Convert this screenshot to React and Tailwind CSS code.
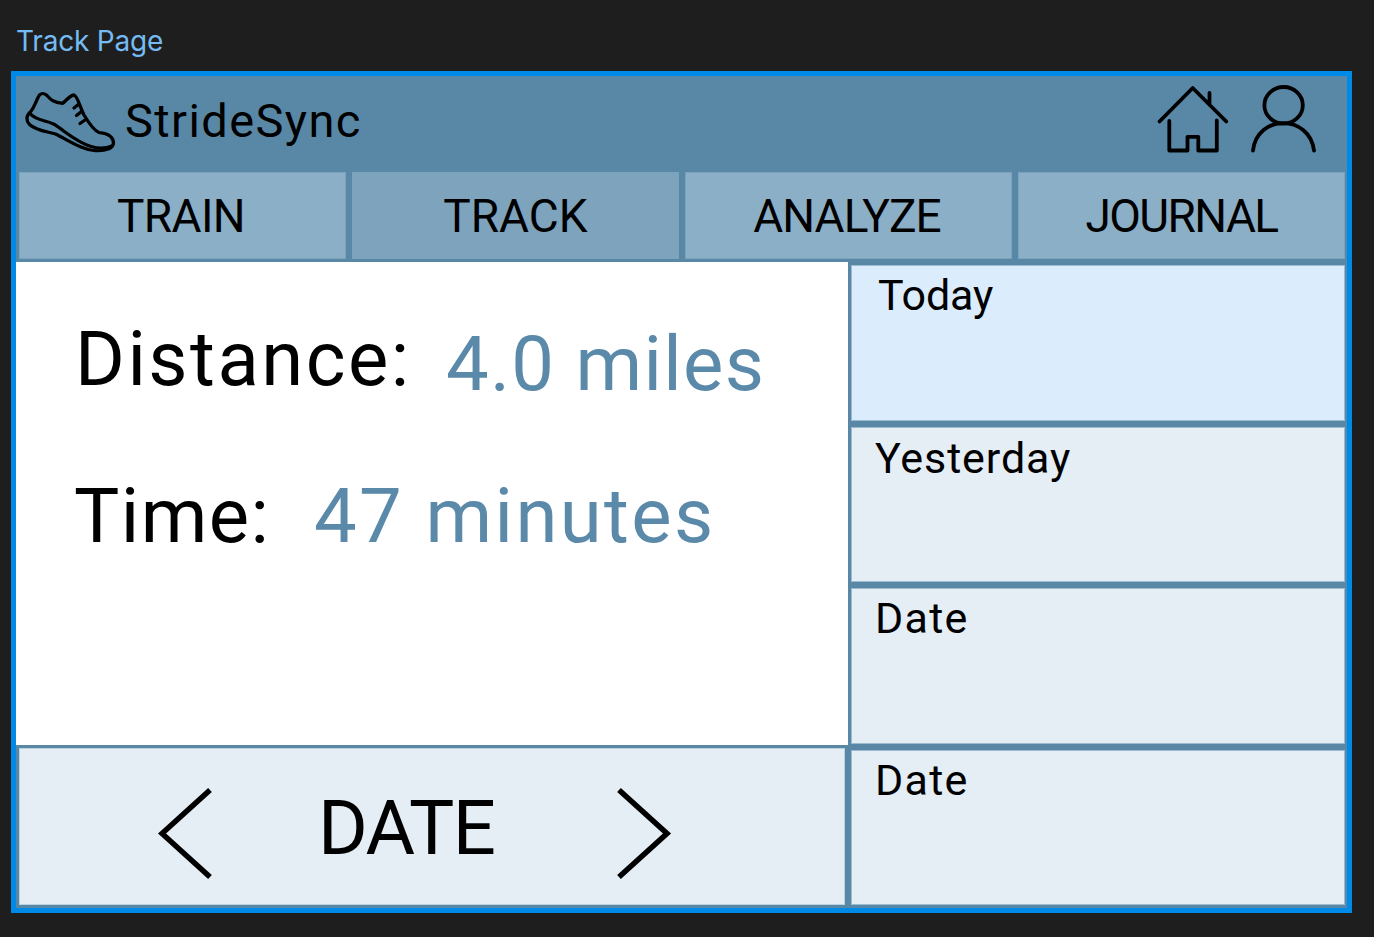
import React from "react";

const tabs = [
  { label: "TRAIN", box: "bg-[#8bafc6]", text: "tracking-[-0.6px] pr-[3px]" },
  { label: "TRACK", box: "bg-[#7da3bd]", text: "tracking-[0px]" },
  { label: "ANALYZE", box: "bg-[#8bafc6]", text: "tracking-[-0.9px] pr-[3px]" },
  { label: "JOURNAL", box: "bg-[#8bafc6]", text: "tracking-[-1.6px] pr-[0px]" },
];

const days = [
  { label: "Today", box: "bg-[#dbecfd] pl-[26px] pt-[8px]", text: "tracking-[-0.1px]" },
  { label: "Yesterday", box: "bg-[#e5edf5] pl-[23px] pt-[9px]", text: "tracking-[0.9px]" },
  { label: "Date", box: "bg-[#e5edf5] pl-[23px] pt-[8px]", text: "tracking-[1.3px]" },
  { label: "Date", box: "bg-[#e5edf5] pl-[23px] pt-[8px]", text: "tracking-[1.3px]" },
];

function ShoeIcon() {
  return (
    <svg className="h-[70px] w-[96px] shrink-0" viewBox="22 86 96 70" fill="none" stroke="#000" strokeWidth="3.3" strokeLinecap="round" strokeLinejoin="round">
      <path d="M30 112.500C35 107 37 98 39.500 95C41.500 93 44.500 93 47 95.500C51 100 53.500 102.500 62.800 103.300C66 100.500 70 95.500 74 95C77.500 96 79.500 106 84 115C88.500 122.500 93.500 130.500 99 132.500C103.500 133.300 107.500 132.800 111.500 137.500C114.800 142 114 146 109 148.800C101 151.800 90 151 81 147C71 143 63 137.500 55.500 134C47 131.500 36 130.500 29.500 124.500C26 120.500 26 116 30 112.500Z" />
      <path d="M29.500 113C36 121 46 120 54 124.200C66 132 76 142 91 146.500C98 148.700 105 149 112 146" />
      <path d="M79 104L74 108M81.500 111.500L76.500 115.500M85 120L80 123.500" />
    </svg>
  );
}

function HomeIcon() {
  return (
    <svg className="h-[72px] w-[74px]" viewBox="1156 83 74 72" fill="none" stroke="#000" strokeWidth="3.8" strokeLinecap="round" strokeLinejoin="round">
      <path d="M1159.500 121.500L1192.700 88L1226.300 121.500M1209.500 93V104" />
      <path d="M1169.300 121V150.500H1187.500V136.800H1198.300V150.500H1216.800V120.500" />
    </svg>
  );
}

function PersonIcon() {
  return (
    <svg className="h-[72px] w-[70px]" viewBox="1249 83 70 72" fill="none" stroke="#000" strokeWidth="3.8" strokeLinecap="round">
      <ellipse cx="1283.600" cy="105.300" rx="19.200" ry="18.300" />
      <path d="M1253 150.500C1257 114 1309.500 114 1314 150.500" />
    </svg>
  );
}

function Chevron({ d }) {
  return (
    <svg className="h-[96px] w-[56px] shrink-0" viewBox="0 0 56 96" fill="none" stroke="#000" strokeWidth="5.5">
      <path d={d} />
    </svg>
  );
}

export default function App() {
  return (
    <div className="h-[937px] w-[1374px] overflow-hidden bg-[#1e1e1e] pl-[11px] pt-[27px] font-['Roboto','Liberation_Sans',sans-serif] text-black whitespace-nowrap">
      <div className="h-[44px] pl-[5px] font-['Inter',sans-serif] text-[28px] leading-none tracking-[-0.2px] text-[#74bbf3]">Track Page</div>
      <div className="h-[842px] w-[1341px] border-[5px] border-[#008ae8] bg-[#5988a7]">
        <header className="flex h-[96px] pl-[6px] pt-[7px]">
          <div className="pt-[3px]"><ShoeIcon /></div>
          <div className="pl-[7px] pt-[14px] text-[47px] leading-none tracking-[1.4px]">StrideSync</div>
          <div className="ml-auto mr-[28px] flex gap-[19px]">
            <HomeIcon />
            <PersonIcon />
          </div>
        </header>
        <nav className="flex h-[90px] gap-[6px] pl-[3px]">
          {tabs.map((t) => (
            <div key={t.label} className={`flex h-[87px] w-[327px] shrink-0 justify-center border border-[#7ca3bc] pt-[20px] text-[46px] leading-none ${t.box}`}>
              <span className={t.text}>{t.label}</span>
            </div>
          ))}
        </nav>
        <main className="flex">
          <section className="w-[832px] shrink-0">
            <div className="h-[483px] bg-white text-[76px] leading-none">
              <div className="flex h-[216px] pl-[59px] pt-[59px]">
                <span className="w-[371px] tracking-[2.5px]">Distance:</span>
                <span className="pt-[5px] tracking-[1.3px] text-[#5b89a9]">4.0 miles</span>
              </div>
              <div className="flex pl-[58px]">
                <span className="w-[240px] tracking-[1.4px]">Time:</span>
                <span className="tracking-[2.4px] text-[#5b89a9]">47 minutes</span>
              </div>
            </div>
            <div className="ml-[3px] mt-[3px] flex h-[157px] w-[826px] border border-[#bdd0de] bg-[#e5edf5] pl-[138px] pt-[36px]">
              <Chevron d="M52 5L4 48.500L52 92" />
              <div className="w-[403px] pl-[104px] pt-[5px] text-[76px] leading-none tracking-[-1.5px]">DATE</div>
              <Chevron d="M2 5L50 48.500L2 92" />
            </div>
          </section>
          <aside className="flex flex-col gap-[6px] pl-[3px] pt-[3px]">
            {days.map((d, i) => (
              <div key={i} className={`h-[155.5px] w-[494px] border border-[#9dbbd0] text-[43px] leading-none ${d.box}`}>
                <span className={`block ${d.text}`}>{d.label}</span>
              </div>
            ))}
          </aside>
        </main>
      </div>
    </div>
  );
}
